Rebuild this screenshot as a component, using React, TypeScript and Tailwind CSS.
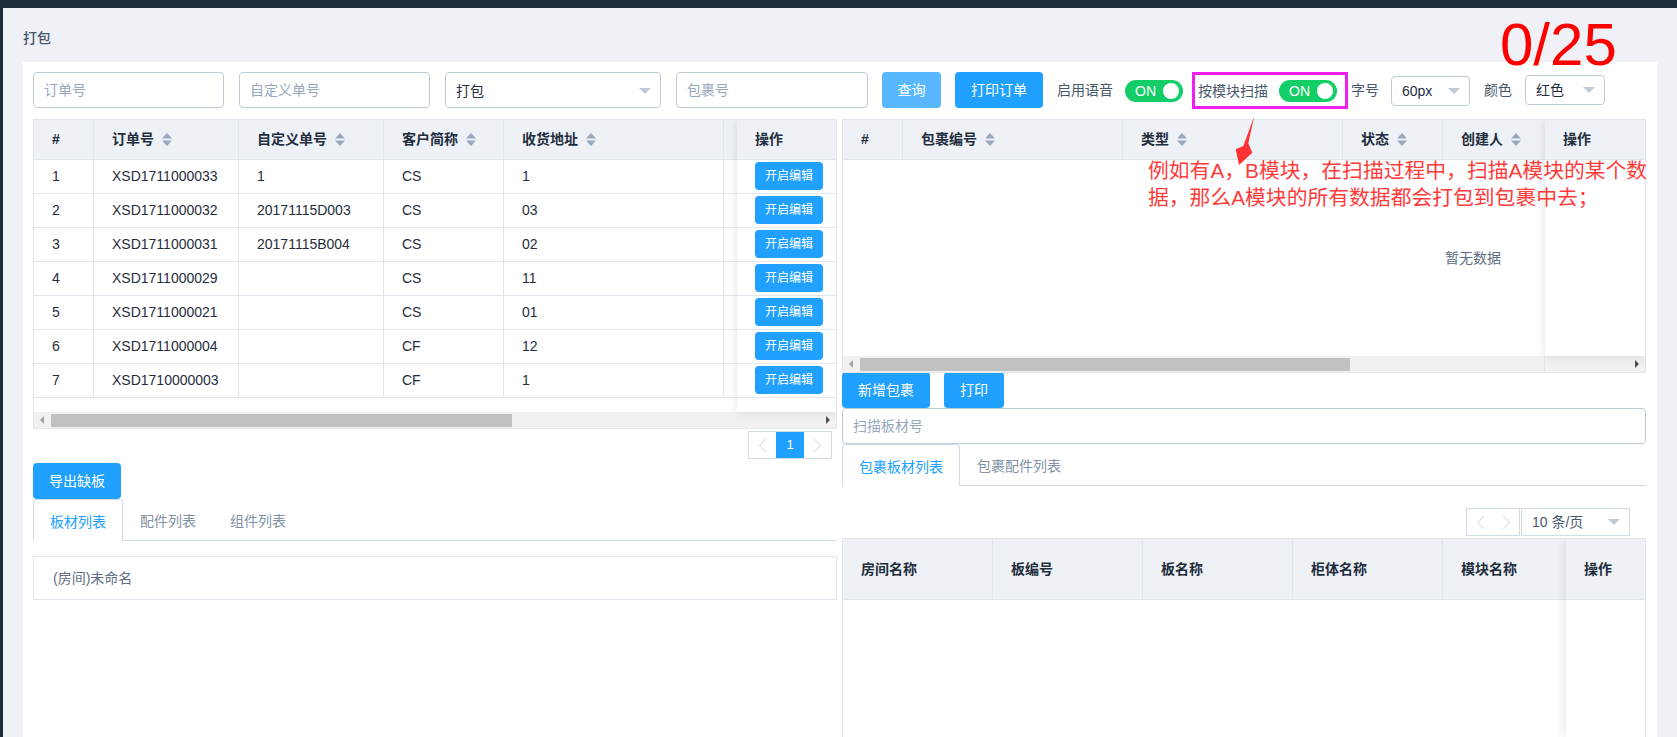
const orders = [
  ['1', 'XSD1711000033', '1', 'CS', '1'],
  ['2', 'XSD1711000032', '20171115D003', 'CS', '03'],
  ['3', 'XSD1711000031', '20171115B004', 'CS', '02'],
  ['4', 'XSD1711000029', '', 'CS', '11'],
  ['5', 'XSD1711000021', '', 'CS', '01'],
  ['6', 'XSD1711000004', '', 'CF', '12'],
  ['7', 'XSD1710000003', '', 'CF', '1'],
];

function SortIcon() {
  return (
    <svg width="10" height="13" viewBox="0 0 10 13" className="ml-2 shrink-0" fill="#97a8be">
      <path d="M5 0L10 5.5H0Z" />
      <path d="M5 13L0 7.5H10Z" />
    </svg>
  );
}

function Caret() {
  return (
    <svg width="12" height="6" viewBox="0 0 12 6" className="shrink-0" fill="#bfcbd9">
      <path d="M0 0H12L6 6Z" />
    </svg>
  );
}

function Chevron({ dir }: { dir: 'left' | 'right' }) {
  return (
    <svg width="9" height="15" viewBox="0 0 9 15" fill="none" stroke="#e4e7ed" strokeWidth="1.6">
      <path d={dir === 'left' ? 'M8 1L1.5 7.5L8 14' : 'M1 1L7.5 7.5L1 14'} />
    </svg>
  );
}

function TextInput({ placeholder, className }: { placeholder: string; className: string }) {
  return (
    <div className={`h-9 shrink-0 flex items-center border border-[#bfcbd9] rounded bg-white px-[10px] text-sm text-[#97a8be] ${className}`}>
      {placeholder}
    </div>
  );
}

function Select({ value, className }: { value: string; className: string }) {
  return (
    <div className={`shrink-0 flex items-center justify-between border border-[#bfcbd9] rounded bg-white pl-[10px] pr-[9px] text-sm text-[#1f2d3d] ${className}`}>
      <span>{value}</span>
      <Caret />
    </div>
  );
}

function Switch() {
  return (
    <div className="w-[58px] h-[22px] shrink-0 flex items-center justify-between rounded-full bg-[#13ce66] pl-[10px] pr-[4px] text-sm text-white">
      <span>ON</span>
      <span className="w-4 h-4 rounded-full bg-white" />
    </div>
  );
}

function Button({ label, className }: { label: string; className: string }) {
  return (
    <div className={`h-9 shrink-0 flex items-center justify-center rounded text-sm text-white bg-[#20a0ff] ${className}`}>
      {label}
    </div>
  );
}

function Scrollbar({ offset, width }: { offset: string; width: string }) {
  return (
    <div className="relative h-4 bg-[#f1f1f1] flex items-center">
      <svg width="4" height="8" viewBox="0 0 4 8" className="absolute left-[6px]" fill="#a3a3a3">
        <path d="M4 0V8L0 4Z" />
      </svg>
      <div className={`h-[13px] bg-[#c1c1c1] ${offset} ${width}`} />
      <svg width="4" height="8" viewBox="0 0 4 8" className="absolute right-[6px]" fill="#505050">
        <path d="M0 0V8L4 4Z" />
      </svg>
    </div>
  );
}

function Tabs({ tabs, activeWidth, className }: { tabs: string[]; activeWidth: string; className: string }) {
  return (
    <div className={`flex border-b border-[#d1dbe5] text-sm text-[#8391a5] ${className}`}>
      {tabs.map((tab, i) =>
        i === 0 ? (
          <div
            key={tab}
            className={`${activeWidth} -mb-px flex items-center justify-center pt-[3px] bg-white text-[#20a0ff] border border-b-0 border-[#d1dbe5] rounded-t`}
          >
            {tab}
          </div>
        ) : (
          <div key={tab} className="px-[17px] flex items-center pt-[3px]">
            {tab}
          </div>
        ),
      )}
    </div>
  );
}

function Cell({ label, sort, className }: { label: string; sort?: boolean; className: string }) {
  return (
    <div className={`h-full shrink-0 flex items-center pl-[18px] border-r border-[#dfe6ec] ${className}`}>
      <span>{label}</span>
      {sort && <SortIcon />}
    </div>
  );
}

function OrderTable() {
  return (
    <div className="relative h-[310px] overflow-hidden border border-[#dfe6ec] text-sm text-[#1f2d3d]">
      <div className="w-[1340px] h-10 flex bg-[#eef1f6] border-b border-[#dfe6ec] font-semibold">
        <Cell label="#" className="w-[60px] pb-px" />
        <Cell label="订单号" sort className="w-[145px] pb-px" />
        <Cell label="自定义单号" sort className="w-[145px] pb-px" />
        <Cell label="客户简称" sort className="w-[120px] pb-px" />
        <Cell label="收货地址" sort className="w-[220px] pb-px" />
      </div>
      <div className="h-[252px] overflow-hidden">
        {orders.map((row) => (
          <div key={row[0]} className="h-[34px] flex border-b border-[#dfe6ec]">
            <Cell label={row[0]} className="w-[60px] pb-[2px]" />
            <Cell label={row[1]} className="w-[145px] pb-[2px]" />
            <Cell label={row[2]} className="w-[145px] pb-[2px]" />
            <Cell label={row[3]} className="w-[120px] pb-[2px]" />
            <Cell label={row[4]} className="w-[220px] pb-[2px]" />
          </div>
        ))}
      </div>
      <Scrollbar offset="ml-[17px]" width="w-[461px]" />
      {/* fixed action column */}
      <div className="absolute top-0 right-0 w-[99px] h-[292px] bg-white shadow-[0_0_10px_rgba(0,0,0,0.12)]">
        <div className="h-10 flex items-center pl-[18px] pb-px bg-[#eef1f6] border-b border-[#dfe6ec] font-semibold">操作</div>
        {orders.map((row) => (
          <div key={row[0]} className="h-[34px] flex items-center pl-[18px] pb-px border-b border-[#dfe6ec]">
            <div className="w-[68px] h-7 flex items-center justify-center rounded bg-[#20a0ff] text-xs text-white">开启编辑</div>
          </div>
        ))}
      </div>
    </div>
  );
}

function PackageTable() {
  return (
    <div className="relative h-[254px] overflow-hidden border border-[#dfe6ec] text-sm text-[#1f2d3d]">
      <div className="w-[1260px] h-10 flex bg-[#eef1f6] border-b border-[#dfe6ec] font-semibold">
        <Cell label="#" className="w-[60px] pb-px" />
        <Cell label="包裹编号" sort className="w-[220px] pb-px" />
        <Cell label="类型" sort className="w-[220px] pb-px" />
        <Cell label="状态" sort className="w-[100px] pb-px" />
        <Cell label="创建人" sort className="w-[120px] pb-px" />
      </div>
      <div className="w-[1260px] h-[196px] flex items-center justify-center pb-px text-[#5e6d82]">暂无数据</div>
      <Scrollbar offset="ml-[17px]" width="w-[490px]" />
      <div className="absolute top-0 right-0 w-[100px] h-[236px] bg-white shadow-[0_0_10px_rgba(0,0,0,0.12)]">
        <div className="h-10 flex items-center pl-[18px] pb-px bg-[#eef1f6] border-b border-[#dfe6ec] font-semibold">操作</div>
      </div>
      <div className="absolute bottom-0 right-[100px] w-px h-4 bg-[#e2e2e2]" />
    </div>
  );
}

function ItemTable() {
  const heads = ['房间名称', '板编号', '板名称', '柜体名称', '模块名称'];
  return (
    <div className="relative flex-1 min-h-[200px] overflow-hidden border border-b-0 border-[#dfe6ec] text-sm text-[#1f2d3d]">
      <div className="h-[61px] flex bg-[#eef1f6] border-b border-[#dfe6ec] font-semibold">
        {heads.map((head) => (
          <Cell key={head} label={head} className="w-[150px]" />
        ))}
      </div>
      <div className="absolute top-0 bottom-0 right-0 w-[79px] bg-white shadow-[0_0_10px_rgba(0,0,0,0.12)]">
        <div className="h-[61px] flex items-center pl-[18px] bg-[#eef1f6] border-b border-[#dfe6ec] font-semibold">操作</div>
      </div>
    </div>
  );
}

export default function App() {
  return (
    <div className="w-[1677px] h-[737px] overflow-hidden flex flex-col pt-2 pl-[3px] bg-[#1f2d3d] font-['Liberation_Sans','Noto_Sans_CJK_SC',sans-serif]">
      <main className="relative flex-1 min-h-0 flex flex-col px-5 bg-[#eff1f6]">
        <div className="pt-5 pb-[14px] text-sm leading-5 font-medium text-[#48576a]">打包</div>

        <div className="flex-1 min-h-0 overflow-hidden flex flex-col pt-[10px] pl-[10px] bg-white">
          {/* toolbar */}
          <div className="h-[37px] flex items-start text-sm text-[#48576a]">
            <TextInput placeholder="订单号" className="w-[191px]" />
            <TextInput placeholder="自定义单号" className="w-[191px] ml-[15px]" />
            <Select value="打包" className="w-[216px] h-9 ml-[15px] pt-[2px]" />
            <TextInput placeholder="包裹号" className="w-[192px] ml-[15px]" />
            <Button label="查询" className="w-[59px] ml-[14px] !bg-[#58b7ff]" />
            <Button label="打印订单" className="w-[88px] ml-[14px]" />
            <span className="h-9 flex items-center ml-[14px]">启用语音</span>
            <div className="mt-2 ml-[12px]">
              <Switch />
            </div>
            <div className="w-[156px] h-[37px] shrink-0 flex items-center ml-[9px] pl-[3px] border-[3px] border-[#f01ff0]">
              <span className="mr-[11px]">按模块扫描</span>
              <Switch />
            </div>
            <span className="h-9 flex items-center ml-[3px]">字号</span>
            <Select value="60px" className="w-[79px] h-[30px] mt-1 ml-[12px]" />
            <span className="h-9 flex items-center ml-[14px]">颜色</span>
            <Select value="红色" className="w-[80px] h-[30px] mt-[3px] ml-[13px]" />
          </div>

          <div className="flex-1 min-h-0 flex gap-[5px] mt-[10px]">
            {/* left column */}
            <div className="w-[804px] flex flex-col">
              <OrderTable />
              <div className="flex justify-end mt-[2px] pr-[5px] text-[13px]">
                <div className="flex h-7 border border-[#d1dbe5]">
                  <div className="w-[27px] flex items-center justify-center"><Chevron dir="left" /></div>
                  <div className="w-7 flex items-center justify-center bg-[#20a0ff] text-white">1</div>
                  <div className="w-[27px] flex items-center justify-center"><Chevron dir="right" /></div>
                </div>
              </div>
              <Button label="导出缺板" className="w-[88px] mt-1" />
              <Tabs tabs={['板材列表', '配件列表', '组件列表']} activeWidth="w-[90px]" className="h-[42px]" />
              <div className="h-[44px] mt-[15px] flex items-center pl-[19px] border border-[#dfe6ec] text-sm text-[#5e6d82]">(房间)未命名</div>
            </div>

            {/* right column */}
            <div className="w-[804px] flex flex-col">
              <PackageTable />
              <div className="flex -mt-px">
                <Button label="新增包裹" className="w-[88px]" />
                <Button label="打印" className="w-[60px] ml-[14px]" />
              </div>
              <TextInput placeholder="扫描板材号" className="w-[804px]" />
              <Tabs tabs={['包裹板材列表', '包裹配件列表']} activeWidth="w-[118px]" className="h-[42px]" />
              <div className="flex justify-end mt-[22px] pr-4 text-sm">
                <div className="flex h-7 border border-[#d1dbe5]">
                  <div className="w-[26px] flex items-center justify-center"><Chevron dir="left" /></div>
                  <div className="w-[26px] flex items-center justify-center"><Chevron dir="right" /></div>
                </div>
                <div className="w-[109px] h-7 flex items-center justify-between ml-px pl-[10px] pr-[9px] border border-[#d1dbe5] text-[#48576a]">
                  <span>10 条/页</span>
                  <Caret />
                </div>
              </div>
              <div className="flex-1 min-h-0 flex flex-col mt-[2px]">
                <ItemTable />
              </div>
            </div>
          </div>
        </div>

        {/* annotations drawn over the screenshot */}
        <div className="absolute top-[149px] left-[1145px] text-[20.8px] leading-[27px] whitespace-nowrap text-[#ff3b3b]">
          例如有A，B模块，在扫描过程中，扫描A模块的某个数
          <br />
          据，那么A模块的所有数据都会打包到包裹中去；
        </div>
        <div className="absolute top-[7px] left-[1497px] text-[60px] leading-[60px] text-[#ff0000]">0/25</div>
        <svg width="30" height="65" viewBox="0 0 30 65" className="absolute top-[102px] left-[1227px]" fill="#ff3333">
          <path d="M24.3 6L18.3 33.3L22.3 42.7L9 55L5.7 39.3L13.3 36Z" />
        </svg>
      </main>
    </div>
  );
}
